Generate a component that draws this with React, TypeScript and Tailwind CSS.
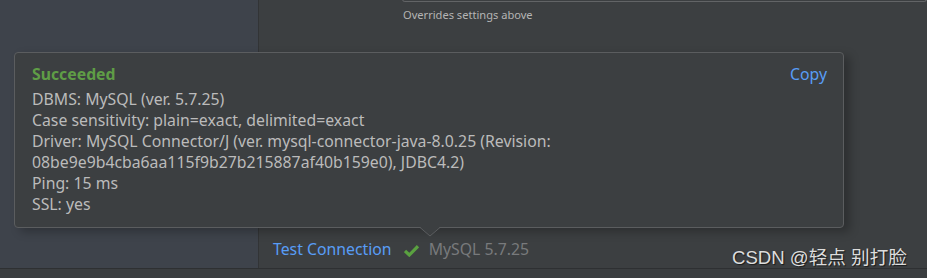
import React from "react";

export default function App() {
  const font = { fontFamily: '"Noto Sans", "Open Sans", sans-serif' };
  return (
    <div className="relative w-[927px] h-[278px] overflow-hidden bg-[#3c3f41] flex flex-col" style={font}>
      <div className="flex flex-1 min-h-0">
        <div className="w-[259px] bg-[#3e434b] border-r border-[#323436]" />
        <div className="flex-1 flex flex-col">
          <div className="pl-[143px]">
            <div className="h-[3px] -mt-px border border-t-0 border-[#626466] rounded-b-[3px]" />
            <div className="pt-[5px] pl-[1px] text-[11.1px] leading-[16px] text-[#b4b4b4]">Overrides settings above</div>
          </div>
          <div className="flex-1" />
          <div className="flex items-center h-[34px] pl-[14px] pb-[2px] gap-[12px] text-[15.8px]">
            <span className="text-[#589df6]">Test Connection</span>
            <span className="flex items-center gap-[10px]">
              <svg width="15" height="13" viewBox="0 0 15 13">
                <path d="M1 7 L5.3 11 L14 2.2" fill="none" stroke="#5aa140" strokeWidth="3.2" />
              </svg>
              <span className="text-[#787a7c]">MySQL 5.7.25</span>
            </span>
          </div>
        </div>
      </div>
      <div className="h-[10px] border-t border-[#2e3032] bg-[#3b3e40]" />

      {/* tooltip */}
      <div className="absolute left-[14px] top-[52px] w-[830px] h-[176px] rounded-[4px] border border-[#5b5d5f] bg-[#3c3f41] shadow-[6px_4px_10px_rgba(0,0,0,0.25)]">
        <div className="flex justify-between pl-[17px] pr-[16px] pt-[11px]">
          <div className="text-[15.8px] leading-[21px] text-[#bbbbbb]">
            <div className="font-bold text-[#5f9d46] mb-[4px]">Succeeded</div>
            <div>DBMS: MySQL (ver. 5.7.25)</div>
            <div>Case sensitivity: plain=exact, delimited=exact</div>
            <div>Driver: MySQL Connector/J (ver. mysql-connector-java-8.0.25 (Revision:</div>
            <div>08be9e9b4cba6aa115f9b27b215887af40b159e0), JDBC4.2)</div>
            <div>Ping: 15 ms</div>
            <div>SSL: yes</div>
          </div>
          <div className="text-[15.8px] leading-[21px] text-[#589df6]">Copy</div>
        </div>
        <svg className="absolute left-[405px] top-[174px]" width="20" height="10" viewBox="0 0 20 10">
          <path d="M0 0.5 L10 9 L20 0.5" fill="#3c3f41" stroke="#5b5d5f" strokeWidth="1" />
          <rect x="1" y="0" width="18" height="1" fill="#3c3f41" />
        </svg>
      </div>

      <div
        className="absolute left-[732px] top-[246px] text-[18.6px] leading-[24px] text-[#dddddd] [text-shadow:1px_1px_1px_rgba(0,0,0,0.6)]"
        style={{ fontFamily: '"Liberation Sans", "Noto Sans CJK SC", sans-serif' }}
      >
        CSDN @轻点 别打脸
      </div>
    </div>
  );
}
